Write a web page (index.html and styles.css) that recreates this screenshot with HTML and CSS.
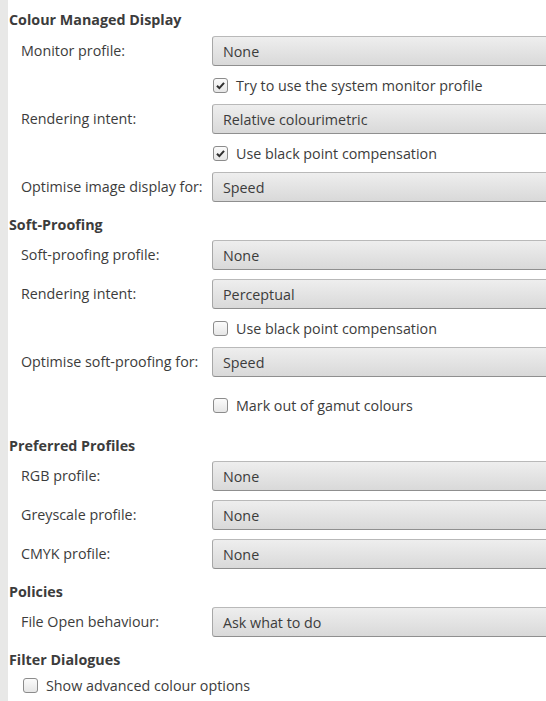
FILE: index.html
```html
<!DOCTYPE html>
<html lang="en">
<head>
  <meta charset="UTF-8" />
  <title>Colour Management</title>
  <link rel="stylesheet" href="styles.css">
</head>
<body>
  <div class="strip"></div>
  <div class="page">

    <h3 class="first">Colour Managed Display</h3>
    <div class="form">
      <label>Monitor profile:</label>
      <div class="combo">None</div>

      <div class="check on"><span class="box"><svg viewBox="0 0 14 14"><path d="M3.2 7.2 L5.8 9.8 L10.8 4.2"/></svg></span>Try to use the system monitor profile</div>

      <label>Rendering intent:</label>
      <div class="combo">Relative colourimetric</div>

      <div class="check on"><span class="box"><svg viewBox="0 0 14 14"><path d="M3.2 7.2 L5.8 9.8 L10.8 4.2"/></svg></span>Use black point compensation</div>

      <label>Optimise image display for:</label>
      <div class="combo">Speed</div>
    </div>

    <h3>Soft-Proofing</h3>
    <div class="form">
      <label>Soft-proofing profile:</label>
      <div class="combo">None</div>

      <label>Rendering intent:</label>
      <div class="combo">Perceptual</div>

      <div class="check"><span class="box"></span>Use black point compensation</div>

      <label>Optimise soft-proofing for:</label>
      <div class="combo">Speed</div>

      <div class="check gamut"><span class="box"></span>Mark out of gamut colours</div>
    </div>

    <h3 class="after-gamut">Preferred Profiles</h3>
    <div class="form">
      <label>RGB profile:</label>
      <div class="combo">None</div>

      <label>Greyscale profile:</label>
      <div class="combo">None</div>

      <label>CMYK profile:</label>
      <div class="combo">None</div>
    </div>

    <h3>Policies</h3>
    <div class="form">
      <label>File Open behaviour:</label>
      <div class="combo">Ask what to do</div>
    </div>

    <h3>Filter Dialogues</h3>
    <div class="check solo"><span class="box"></span>Show advanced colour options</div>

  </div>
</body>
</html>
```

FILE: styles.css
```css
body {
  margin: 0;
  background: #ffffff;
  color: #3c3c3c;
  font-family: "Open Sans", "Noto Sans", sans-serif;
  font-size: 14.3px;
  display: flex;
  height: 701px;
  overflow: hidden;
}

.strip {
  width: 8px;
  flex-shrink: 0;
  background: #e8e8e7;
}

.page {
  flex: 1;
  padding-left: 1px;
  margin-right: -20px;
}

h3 {
  margin: 14px 0 6px 0;
  font-size: 14.3px;
  font-weight: bold;
  line-height: 18px;
}

h3.first {
  margin-top: 11px;
  margin-bottom: 7px;
}

h3.after-gamut {
  margin-top: 22px;
}

.form {
  display: grid;
  grid-template-columns: 203px 1fr;
  row-gap: 9px;
  align-items: center;
}

.form label {
  padding-left: 12px;
  line-height: 20px;
}

.combo {
  grid-column: 2;
  height: 28px;
  line-height: 29px;
  padding-left: 10px;
  border: 1px solid #a7a7a7;
  border-top-color: #b9b9b9;
  border-bottom-color: #8f8f8f;
  border-radius: 3px;
  background: linear-gradient(#eeeeee, #d9d9d9);
}

.check {
  grid-column: 2;
  display: flex;
  align-items: center;
  height: 20px;
  padding-left: 1px;
}

.check.gamut {
  margin-top: 9px;
}

.check.solo {
  margin: 1px 0 0 13px;
}

.box {
  width: 13px;
  height: 13px;
  margin-right: 8px;
  border: 1px solid #8c8c8c;
  border-radius: 3px;
  background: linear-gradient(#fbfbfb, #e6e6e6);
  display: flex;
}

.box svg {
  width: 13px;
  height: 13px;
}

.box path {
  fill: none;
  stroke: #2f2f2f;
  stroke-width: 2.2;
}
```
